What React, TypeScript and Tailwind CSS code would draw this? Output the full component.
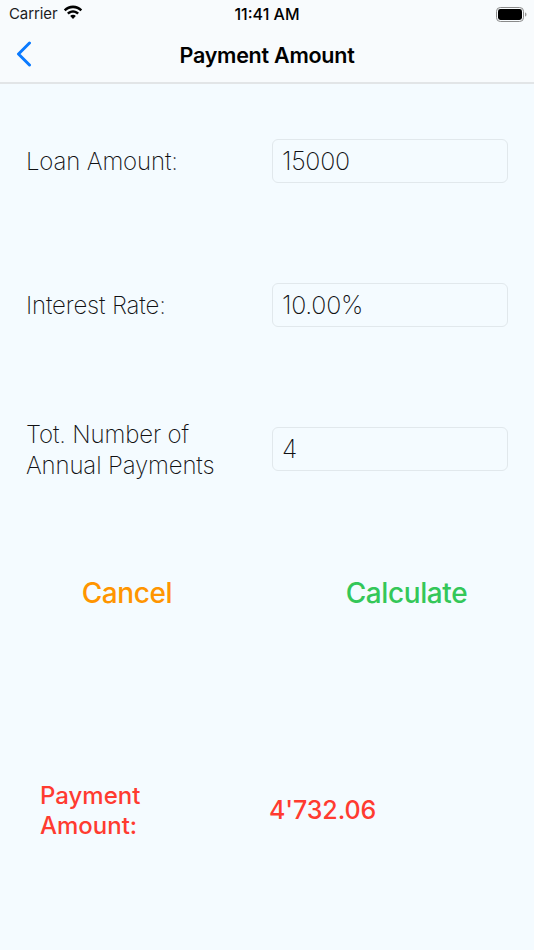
const Wifi = () => (
    <svg width="20" height="15" viewBox="0 0 19 14" className="ml-[6px] mb-[3px]" fill="#000">
        <path d="M9.5 3C12.2 3 14.7 4 16.6 5.8L18.2 4.1C15.9 1.8 12.8.4 9.5.4S3.1 1.8.8 4.1L2.4 5.8C4.3 4 6.8 3 9.5 3Z" />
        <path d="M9.5 7.3C11 7.3 12.4 7.9 13.5 8.9L15.2 7.2C13.6 5.7 11.6 4.8 9.5 4.8S5.4 5.7 3.8 7.2L5.5 8.9C6.6 7.9 8 7.3 9.5 7.3Z" />
        <path d="M9.5 9.2C8.4 9.2 7.5 9.6 6.8 10.3L9.5 13.2 12.2 10.3C11.5 9.6 10.6 9.2 9.5 9.2Z" />
    </svg>
);

const Battery = () => (
    <svg width="31" height="15" viewBox="0 0 31 15">
        <rect x="0.5" y="0.5" width="27" height="14" rx="3.8" fill="none" stroke="#8a8a8a" />
        <rect x="2" y="2" width="24" height="11" rx="2.4" fill="#000" />
        <path d="M29 5.5V9.5C30 9.2 30.5 8.4 30.5 7.5S30 5.8 29 5.5Z" fill="#9a9a9a" />
    </svg>
);

const Field = ({ label, value }: { label: React.ReactNode; value: string }) => (
    <div className="flex items-center h-[44px] pl-[26px] pr-[26px]">
        <div className="w-[246px] shrink-0 pt-[1px] text-[24px] leading-[31px] font-[250] tracking-[-0.15px] text-[#111113]">{label}</div>
        <div className="flex-1 h-[44px] flex items-center pl-[9px] pt-[1px] border border-[#e1e8ec] rounded-[6px] text-[25px] font-[250] tracking-[-0.3px] text-[#111113]">
            {value}
        </div>
    </div>
);

const App = () => {
    return (
        <div className="w-[534px] h-[950px] overflow-hidden flex flex-col bg-[#f4fbff] font-['Inter',sans-serif]">
            {/* status + nav bar */}
            <div className="h-[84px] bg-[#f8fbfd] border-b-2 border-[#e2e5e7] shrink-0 flex flex-col">
                <div className="relative h-[28px] flex items-center justify-between pl-[9px] pr-[7px] text-black">
                    <div className="flex items-center text-[15px] tracking-[-0.1px] text-[#1c1c1e]">
                        Carrier
                        <Wifi />
                    </div>
                    <div className="absolute left-0 right-0 text-center text-[16px] font-medium">11:41 AM</div>
                    <Battery />
                </div>
                <div className="relative flex-1 flex items-center justify-center">
                    <svg width="16" height="26" viewBox="0 0 16 26" className="absolute left-[16px] top-[13px]" fill="none" stroke="#0a7aff" strokeWidth="3" strokeLinecap="round" strokeLinejoin="round">
                        <path d="M13.5 2 2.5 13 13.5 24" />
                    </svg>
                    <span className="text-[21.5px] font-semibold tracking-[-0.25px] text-black">Payment Amount</span>
                </div>
            </div>

            <div className="flex-1 flex flex-col pt-[55px]">
                <div className="flex flex-col gap-[100px]">
                    <Field label="Loan Amount:" value="15000" />
                    <Field label="Interest Rate:" value="10.00%" />
                    <Field label={<>Tot. Number of<br />Annual Payments</>} value="4" />
                </div>

                <div className="flex mt-[104px] text-[28px] font-[540] tracking-[-0.4px] h-[36px] items-center">
                    <button className="w-[254px] text-center text-[#ff9500]">Cancel</button>
                    <button className="w-[280px] pl-[25px] text-center text-[#34c759]">Calculate</button>
                </div>

                <div className="flex items-center mt-[170px] text-[#ff3b30] text-[24px] font-[450]">
                    <div className="w-[269px] pl-[40px] leading-[30px]">Payment<br />Amount:</div>
                    <div className="pb-[1px] text-[25px] tracking-[-0.1px]">4'732.06</div>
                </div>
            </div>
        </div>
    );
};

export default App;
